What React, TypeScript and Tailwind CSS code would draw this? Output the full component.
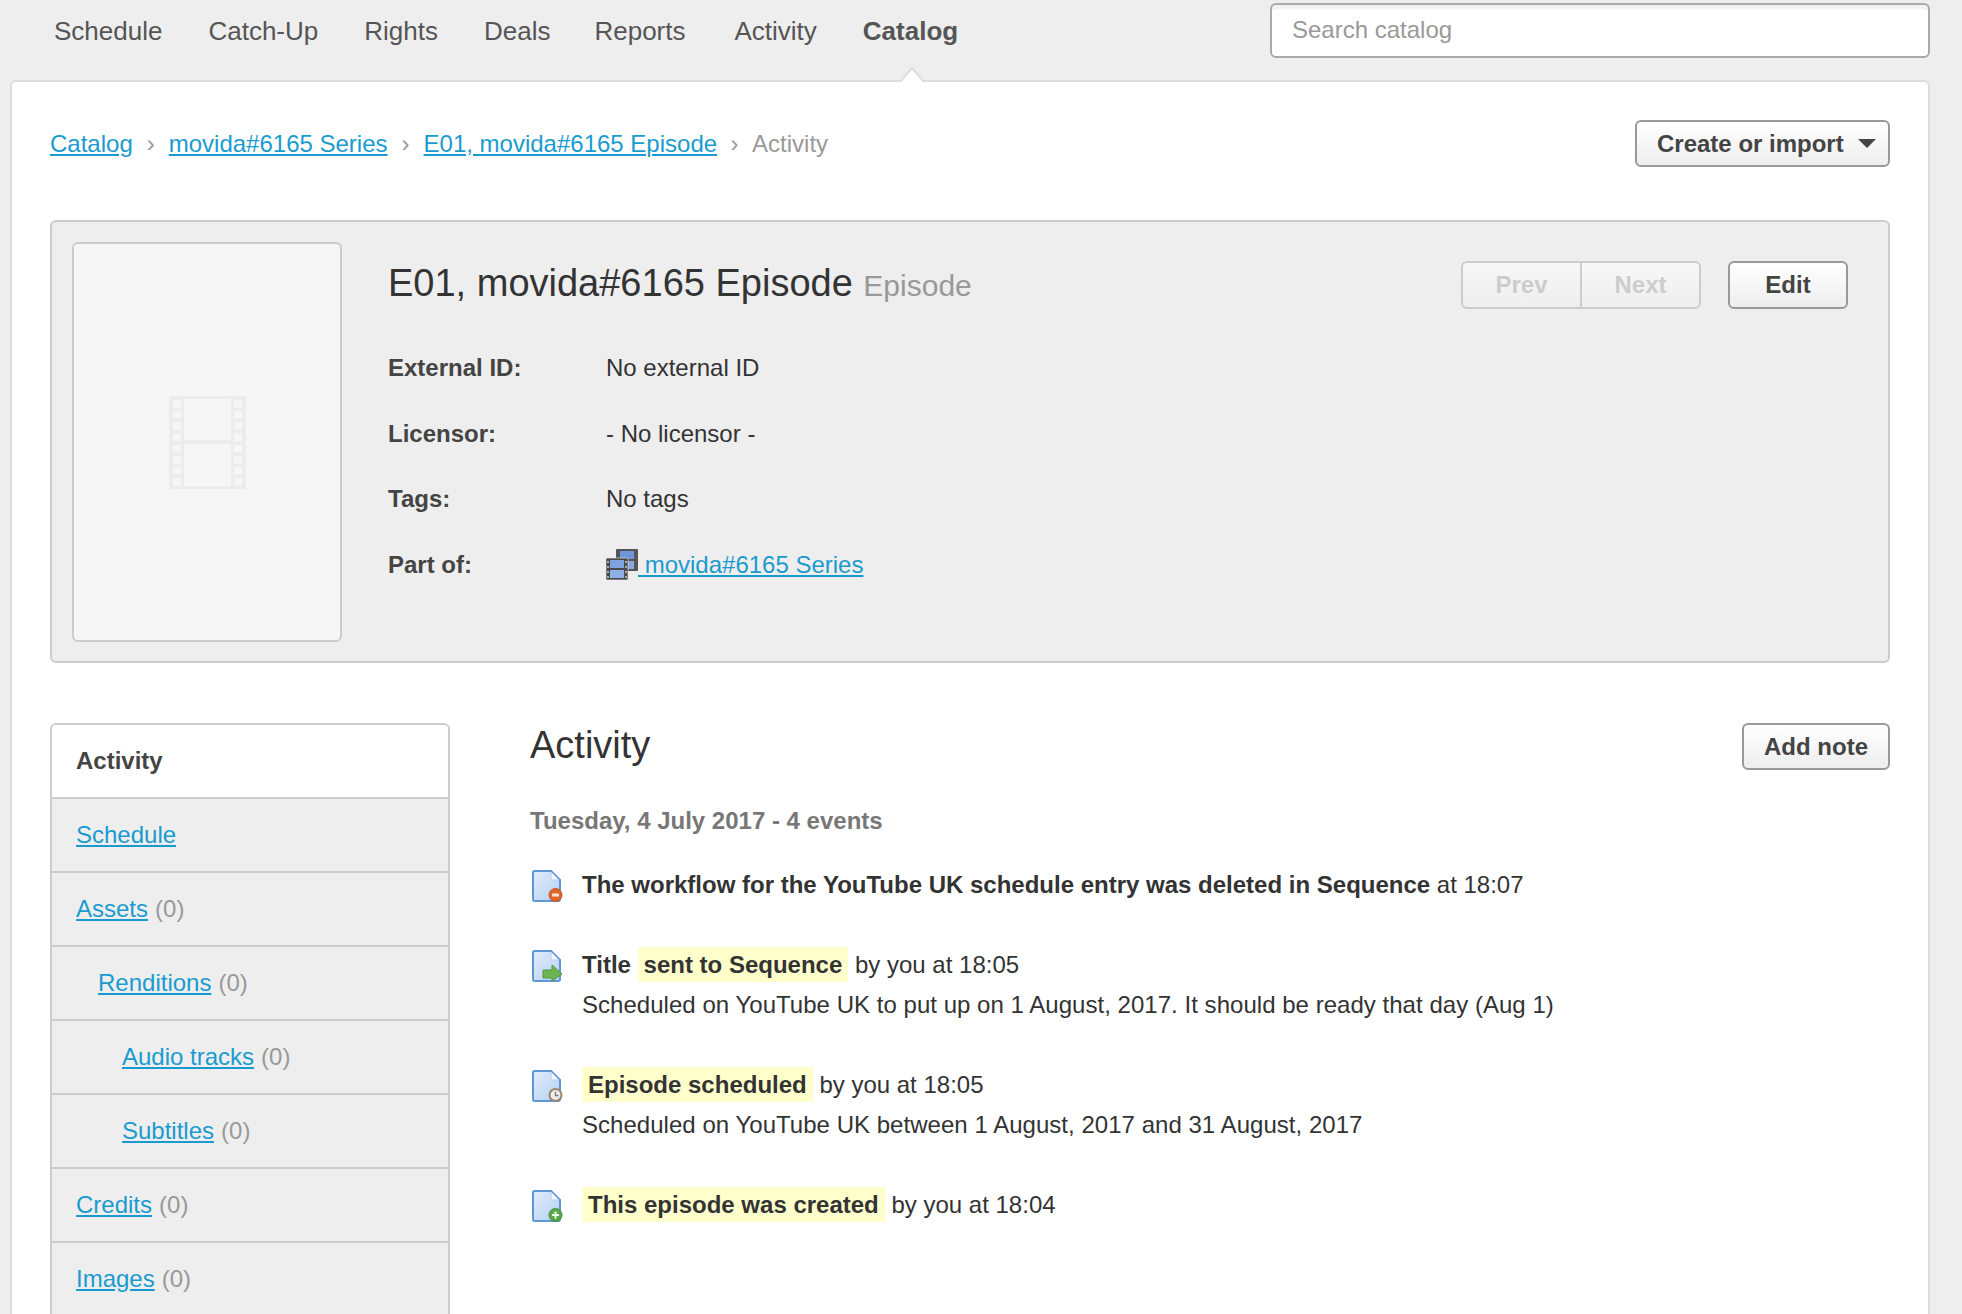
import { ReactNode } from 'react'

const navItems = [
  { label: 'Schedule', cls: '' },
  { label: 'Catch-Up', cls: '' },
  { label: 'Rights', cls: '' },
  { label: 'Deals', cls: '' },
  { label: 'Reports', cls: '-ml-[2px]' },
  { label: 'Activity', cls: 'ml-[3px]' },
]

const sideItems = [
  { label: 'Schedule', indent: 'pl-6' },
  { label: 'Assets', count: 0, indent: 'pl-6' },
  { label: 'Renditions', count: 0, indent: 'pl-[46px]' },
  { label: 'Audio tracks', count: 0, indent: 'pl-[70px]' },
  { label: 'Subtitles', count: 0, indent: 'pl-[70px]' },
  { label: 'Credits', count: 0, indent: 'pl-6' },
  { label: 'Images', count: 0, indent: 'pl-6' },
]

const buttonCls =
  'flex items-center justify-center rounded-md border-2 border-[#999] bg-gradient-to-b from-white to-[#eee] text-2xl font-bold text-[#444]'

function FilmIcon() {
  const holes = [0, 1, 2, 3, 4, 5, 6, 7]
  return (
    <svg width="77" height="93" viewBox="0 0 77 93">
      <rect width="77" height="93" fill="#ececec" />
      <rect x="15" y="3" width="47" height="41" fill="#f6f6f6" />
      <rect x="15" y="48" width="47" height="42" fill="#f6f6f6" />
      {holes.map(i => (
        <g key={i} fill="#f6f6f6">
          <rect x="4" y={4 + i * 11.2} width="8" height="7.5" />
          <rect x="65" y={4 + i * 11.2} width="8" height="7.5" />
        </g>
      ))}
    </svg>
  )
}

function SeriesIcon() {
  return (
    <svg width="32" height="31" viewBox="0 0 32 31" className="inline-block align-[-7px]">
      <rect x="10" y="0" width="22" height="22" rx="1" fill="#555" />
      <rect x="14" y="2" width="14" height="8" fill="#6f97d8" />
      <rect x="14" y="12" width="14" height="8" fill="#86a9e0" />
      <rect x="0" y="9" width="22" height="22" rx="1" fill="#4a4a4a" stroke="#eee" strokeWidth="0.6" />
      <rect x="4" y="11" width="14" height="8" fill="#7ea3de" />
      <rect x="4" y="21" width="14" height="8" fill="#8fb0e6" />
      <g fill="#aaa">
        <rect x="1" y="12" width="2" height="2" />
        <rect x="1" y="17" width="2" height="2" />
        <rect x="1" y="22" width="2" height="2" />
        <rect x="1" y="27" width="2" height="2" />
        <rect x="19" y="12" width="2" height="2" />
        <rect x="19" y="17" width="2" height="2" />
        <rect x="19" y="22" width="2" height="2" />
        <rect x="19" y="27" width="2" height="2" />
      </g>
    </svg>
  )
}

function DocIcon({ id, children }: { id: string; children: ReactNode }) {
  return (
    <svg width="32" height="32" viewBox="0 0 32 32" className="ml-px mt-[5px] shrink-0">
      <defs>
        <linearGradient id={id} x1="0" y1="0" x2="1" y2="1">
          <stop offset="0" stopColor="#e2edfb" />
          <stop offset="1" stopColor="#b5d0f4" />
        </linearGradient>
      </defs>
      <path d="M2 2.5 a1.5 1.5 0 0 1 1.5-1.5 H20 L29 10 V29.5 a1.5 1.5 0 0 1-1.5 1.5 H3.5 a1.5 1.5 0 0 1-1.5-1.5 Z" fill={`url(#${id})`} stroke="#5f97d6" strokeWidth="2" />
      <path d="M20 2 V10 H28 Z" fill="#f3f7fd" stroke="#b7cfef" strokeWidth="1" />
      {children}
    </svg>
  )
}

function Hl({ children }: { children: ReactNode }) {
  return <span className="bg-[#ffc] px-[6px] py-1 font-bold">{children}</span>
}

export default function App() {
  return (
    <div className="h-[1314px] overflow-hidden bg-[#eee] font-['Liberation_Sans',Arial,sans-serif] text-2xl text-[#333]">
      {/* Top nav */}
      <div className="flex h-[80px] items-start justify-between pl-[54px] pr-8">
        <nav className="flex gap-[46px] pt-4 text-[26px] leading-[30px] text-[#555]">
          {navItems.map(n => (
            <a key={n.label} className={n.cls}>{n.label}</a>
          ))}
          <a className="font-bold">Catalog</a>
        </nav>
        <input
          placeholder="Search catalog"
          className="mt-[3px] h-[55px] w-[660px] rounded-md border-2 border-[#aaa] bg-white pb-[2px] pl-5 text-2xl shadow-[inset_0_6px_2px_-2px_#f1f1f1] outline-none placeholder:text-[#999]"
        />
      </div>

      <div className="relative ml-[10px] mr-8 rounded-t-md border-2 border-b-0 border-[#ddd] bg-white px-[38px] pt-[38px]">
        <svg width="26" height="15" viewBox="0 0 26 15" className="absolute -top-[15px] left-[887px]">
          <path d="M1 15 L13 1 L25 15 Z" fill="#fff" />
          <path d="M1 15 L13 1 L25 15" fill="none" stroke="#ddd" strokeWidth="2" />
        </svg>

        {/* Breadcrumb */}
        <div className="flex h-[47px] items-center justify-between">
          <div className="flex items-center text-[#999]">
            <a className="text-[#1a9bd0] underline">Catalog</a>
            <span className="w-[36px] text-center">›</span>
            <a className="text-[#1a9bd0] underline">movida#6165 Series</a>
            <span className="w-[36px] text-center">›</span>
            <a className="text-[#1a9bd0] underline">E01, movida#6165 Episode</a>
            <span className="w-[35px] text-center">›</span>
            <span>Activity</span>
          </div>
          <button className={`${buttonCls} h-[47px] w-[255px] !justify-start gap-[14px] pl-5`}>
            Create or import
            <span className="h-0 w-0 border-x-[9px] border-t-[9px] border-x-transparent border-t-[#444]" />
          </button>
        </div>

        {/* Summary card */}
        <div className="mt-[53px] flex h-[443px] rounded-md border-2 border-[#ccc] bg-[#eee] p-5">
          <div className="flex h-[400px] w-[270px] shrink-0 items-center justify-center rounded-md border-2 border-[#ccc] bg-[#f6f6f6]">
            <FilmIcon />
          </div>
          <div className="flex-1 pl-[46px] pr-5 pt-[19px]">
            <div className="flex h-12 items-start justify-between">
              <h1 className="text-[38px] leading-[44px] text-[#333]">
                E01, movida#6165 Episode <span className="text-[30px] text-[#999]">Episode</span>
              </h1>
              <div className="flex">
                <button className="flex h-12 w-[121px] items-center justify-center rounded-l-md border-2 border-[#ccc] bg-gradient-to-b from-[#f8f8f8] to-[#eee] text-2xl font-bold text-[#ccc]">Prev</button>
                <button className="-ml-[2px] flex h-12 w-[121px] items-center justify-center rounded-r-md border-2 border-[#ccc] bg-gradient-to-b from-[#f8f8f8] to-[#eee] text-2xl font-bold text-[#ccc]">Next</button>
                <button className={`${buttonCls} ml-[27px] h-12 w-[120px] text-[#333]`}>Edit</button>
              </div>
            </div>
            <dl className="mt-[26px] grid grid-cols-[218px_1fr] auto-rows-[65.7px] items-center">
              <dt className="font-bold text-[#444]">External ID:</dt>
              <dd>No external ID</dd>
              <dt className="font-bold text-[#444]">Licensor:</dt>
              <dd>- No licensor -</dd>
              <dt className="font-bold text-[#444]">Tags:</dt>
              <dd>No tags</dd>
              <dt className="font-bold text-[#444]">Part of:</dt>
              <dd>
                <a className="text-[#1a9bd0] underline">
                  <SeriesIcon /> movida#6165 Series
                </a>
              </dd>
            </dl>
          </div>
        </div>

        {/* Lower section */}
        <div className="mt-[60px] flex gap-20">
          <div className="w-[400px] shrink-0 overflow-hidden rounded-md border-2 border-[#ccc] bg-[#eee]">
            <div className="flex h-[74px] items-center border-b-2 border-[#ccc] bg-white pl-6 font-bold text-[#444]">Activity</div>
            {sideItems.map(s => (
              <div key={s.label} className={`flex h-[74px] items-center gap-[7px] border-b-2 border-[#ccc] ${s.indent}`}>
                <a className="text-[#1a9bd0] underline">{s.label}</a>
                {s.count !== undefined && <span className="text-[#999]">({s.count})</span>}
              </div>
            ))}
          </div>

          <div className="flex-1">
            <div className="flex items-start justify-between">
              <h2 className="text-[38px] leading-[44px] text-[#333]">Activity</h2>
              <button className={`${buttonCls} h-[47px] w-[148px]`}>Add note</button>
            </div>
            <div className="mb-6 mt-[31px] font-bold leading-10 text-[#777]">Tuesday, 4 July 2017 - 4 events</div>

            <div className="flex flex-col gap-10 leading-10">
              <div className="flex gap-[19px]">
                <DocIcon id="d1">
                  <circle cx="24.5" cy="25" r="6.5" fill="#e0652a" stroke="#c9521c" />
                  <rect x="21" y="23.5" width="7" height="3" fill="#fbe3d3" />
                </DocIcon>
                <div>
                  <b>The workflow for the YouTube UK schedule entry was deleted in Sequence</b> at 18:07
                </div>
              </div>
              <div className="flex gap-[19px]">
                <DocIcon id="d2">
                  <path d="M12 20 H21 V15 L31 24 L21 31 V28 H12 Z" fill="#6eb256" stroke="#4f9a3a" />
                </DocIcon>
                <div>
                  <div>
                    <b>Title</b> <Hl>sent to Sequence</Hl> by you at 18:05
                  </div>
                  <div className="tracking-[0.03px]">Scheduled on YouTube UK to put up on 1 August, 2017. It should be ready that day (Aug 1)</div>
                </div>
              </div>
              <div className="flex gap-[19px]">
                <DocIcon id="d3">
                  <circle cx="24.5" cy="25" r="6" fill="#eee" stroke="#a0836a" strokeWidth="2" />
                  <path d="M24.5 21.5 V25.5 H27.5" fill="none" stroke="#777" strokeWidth="1.3" />
                </DocIcon>
                <div>
                  <div>
                    <Hl>Episode scheduled</Hl> by you at 18:05
                  </div>
                  <div className="tracking-[0.03px]">Scheduled on YouTube UK between 1 August, 2017 and 31 August, 2017</div>
                </div>
              </div>
              <div className="flex gap-[19px]">
                <DocIcon id="d4">
                  <circle cx="24.5" cy="25" r="6.5" fill="#5ba84a" stroke="#3f8f34" />
                  <path d="M24.5 21.5 V28.5 M21 25 H28" stroke="#eef8ea" strokeWidth="2" />
                </DocIcon>
                <div>
                  <Hl>This episode was created</Hl> by you at 18:04
                </div>
              </div>
            </div>
          </div>
        </div>
      </div>
    </div>
  )
}
